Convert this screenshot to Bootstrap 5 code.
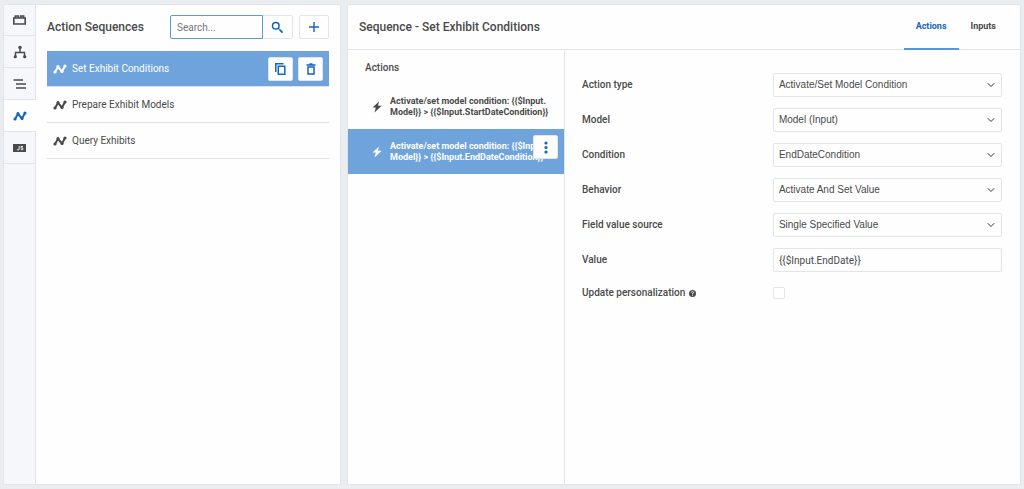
<!DOCTYPE html>
<html lang="en">
<head>
<meta charset="utf-8">
<meta name="viewport" content="width=device-width, initial-scale=1">
<title>Action Sequences</title>
<link href="https://cdn.jsdelivr.net/npm/bootstrap@5.3.0/dist/css/bootstrap.min.css" rel="stylesheet">
<style>
  :root { --line: #e1e4e9; --ink: #4a4a4a; --accent: #1464c0; --sel: #6fa3dc; }
  body { font-family: Roboto, "Liberation Sans", sans-serif; font-size: 10px; line-height: 12px; color: var(--ink); background: #e9edf0; }
  svg { display: block; flex: none; }
  .workspace { padding: 4px 3px; gap: 6px; }
  .panel { background: #fefefe; border: 1px solid var(--line); border-radius: 2px; }
  .panel-side { flex: 0 0 338px; }
  .rail { width: 32px; background: #f5f7fa; border-right: 1px solid var(--line); }
  .rail button { height: 32px; width: 31px; border: 0; border-bottom: 1px solid var(--line); background: transparent; color: var(--ink); }
  .rail button:first-child { height: 31px; }
  .rail button.active { background: #fefefe; color: var(--accent); width: 32px; }
  .title { font-size: 12px; line-height: 16px; font-weight: 500; margin: 0; }
  .side-body { padding: 10px 11px; }
  .side-head { height: 24px; margin-bottom: 12px; }
  .btn-box { padding: 0; border: 1px solid var(--line); border-radius: 2px; background: #fefefe; color: var(--accent); display: flex; align-items: center; justify-content: center; height: 24px; }
  .btn-sq { width: 25px; } .btn-wide { width: 30px; }
  .search { width: 93px; height: 24px; border: 1px solid #5b98dc; border-radius: 2px 0 0 2px; padding: 0 6px; font-size: 10px; color: var(--ink); background: #fefefe; }
  .search::placeholder { color: #757575; opacity: 1; }
  .search-btn { width: 30px; border-left: 0; border-radius: 0 2px 2px 0; margin-right: 6px; }
  .seq { height: 36px; padding: 0 6px; border-bottom: 1px solid #dfe0e3; gap: 5px; }
  .seq a, .act a { color: inherit; text-decoration: none; white-space: nowrap; }
  .seq.active, .act.active { background: var(--sel); color: #fff; }
  .main-head { height: 45px; border-bottom: 1px solid var(--line); padding: 0 12px 0 11px; }
  .tab { padding: 0 12px; height: 45px; line-height: 43px; font-size: 9px; font-weight: 700; color: var(--ink); text-decoration: none; border-bottom: 2px solid transparent; }
  .tab.active { color: var(--accent); border-color: #5596da; }
  .act-col { flex: 0 0 217px; min-width: 0; border-right: 1px solid var(--line); }
  .act-col h2 { font-size: 10px; line-height: 12px; font-weight: 500; margin: 0; padding: 12px 17px 10px; }
  .act { height: 45px; padding: 0 8px 0 24px; gap: 8px; font-size: 9px; font-weight: 700; line-height: 11px; }
  .act .more { position: absolute; right: 6px; top: 6px; }
  .fields { padding: 23px 18px 23px 17px; display: flex; flex-direction: column; gap: 11px; }
  .field { display: grid; grid-template-columns: 5fr 6fr; align-items: center; min-height: 24px; }
  .field label { font-weight: 500; }
  .field .form-select, .field .form-control { height: 24px; min-height: 24px; padding: 0 5px; border: 1px solid var(--line); border-radius: 2px; font-size: 10px; line-height: 22px; color: var(--ink); background-color: #fefefe; }
  .field .form-select { font-family: "Liberation Sans", sans-serif; background-position: right 6px center; background-size: 8px 8px; }
  .field .form-check-input { width: 12px; height: 12px; margin: 0; border: 1px solid var(--line); border-radius: 2px; }
  .field-check { min-height: 20px; }
</style>
</head>
<body>
<svg width="0" height="0" class="d-none" aria-hidden="true">
  <symbol id="trend" viewBox="0 0 14 10"><path d="M2 8 5 3l4 4.500L12 2" fill="none" stroke="currentColor" stroke-width="2"/><circle cx="2" cy="8" r="1.600" fill="currentColor"/><circle cx="5" cy="2.500" r="1.600" fill="currentColor"/><circle cx="9" cy="7.500" r="1.600" fill="currentColor"/><circle cx="12" cy="2" r="1.600" fill="currentColor"/></symbol>
  <symbol id="bolt" viewBox="0 0 10 12"><path d="M7 .5.5 6.500h3.300L2.500 11.500 9.700 4.800H6z" fill="currentColor"/></symbol>
</svg>
<div class="workspace d-flex vh-100">
  <aside class="panel panel-side d-flex">
    <nav class="rail d-flex flex-column" aria-label="Sections">
      <button type="button" class="d-flex align-items-center justify-content-center p-0" aria-label="Models"><svg width="13" height="10" viewBox="0 0 13 10" fill="none" stroke="currentColor" stroke-width="1.600"><path d="M.8 3h11.400v6H.8zM2.300 3V1h3v2M7.700 3V1h3v2"/></svg></button>
      <button type="button" class="d-flex align-items-center justify-content-center p-0" aria-label="Structure"><svg width="14" height="14" viewBox="0 0 14 14"><path d="M7 3v4M2.500 11V7.500h9V11" fill="none" stroke="currentColor" stroke-width="1.400"/><g fill="currentColor"><circle cx="7" cy="2.500" r="1.700"/><circle cx="2.300" cy="11.700" r="1.600"/><circle cx="11.700" cy="11.700" r="1.600"/></g></svg></button>
      <button type="button" class="d-flex align-items-center justify-content-center p-0" aria-label="Outline"><svg width="14" height="10" viewBox="0 0 14 10" stroke="currentColor" stroke-width="1.500"><path d="M.5 1H10M3 5h10M3 9h10"/></svg></button>
      <button type="button" class="active d-flex align-items-center justify-content-center p-0" aria-label="Action sequences"><svg width="14" height="10"><use href="#trend"/></svg></button>
      <button type="button" class="d-flex align-items-center justify-content-center p-0" aria-label="Scripts"><svg width="13" height="8" viewBox="0 0 13 8"><rect width="13" height="8" fill="currentColor"/><path d="M6.200 2v3q0 1-1 1t-1-1M10 2.500H8v1.500h1.800v1.600H7.700" fill="none" stroke="#f5f7fa" stroke-width=".9"/></svg></button>
    </nav>
    <div class="side-body flex-grow-1">
      <div class="side-head d-flex align-items-center">
        <h1 class="title me-auto">Action Sequences</h1>
        <input class="search" type="text" placeholder="Search..." aria-label="Search">
        <button type="button" class="btn-box search-btn" aria-label="Search"><svg width="13" height="13" viewBox="0 0 13 13" fill="none" stroke="currentColor"><circle cx="4.800" cy="4.800" r="3.300" stroke-width="1.500"/><path d="m7.200 7.200 1.300 1.300" stroke-width="1.200"/><path d="m8.600 8.600 3 3" stroke-width="1.800"/></svg></button>
        <button type="button" class="btn-box btn-wide" aria-label="Add"><svg width="10" height="10" viewBox="0 0 10 10" stroke="currentColor" stroke-width="1.400"><path d="M5 0v10M0 5h10"/></svg></button>
      </div>
      <div>
        <div class="seq active d-flex align-items-center">
          <svg width="14" height="10"><use href="#trend"/></svg><a href="#" class="me-auto">Set Exhibit Conditions</a>
          <button type="button" class="btn-box btn-sq" aria-label="Copy"><svg width="11" height="12" viewBox="0 0 11 12" fill="none" stroke="currentColor" stroke-width="1.500"><path d="M3.300 3.300h6.500v8H3.300zM.8 9V.8h7.700"/></svg></button>
          <button type="button" class="btn-box btn-sq" aria-label="Delete"><svg width="10" height="12" viewBox="0 0 10 12" fill="none" stroke="currentColor" stroke-width="1.500"><path d="M.5 2h9M3.500 1h3M2 4h6v7H2z"/></svg></button>
        </div>
        <div class="seq d-flex align-items-center"><svg width="14" height="10"><use href="#trend"/></svg><a href="#">Prepare Exhibit Models</a></div>
        <div class="seq d-flex align-items-center"><svg width="14" height="10"><use href="#trend"/></svg><a href="#">Query Exhibits</a></div>
      </div>
    </div>
  </aside>
  <main class="panel flex-grow-1 d-flex flex-column">
    <header class="main-head d-flex align-items-center">
      <h1 class="title me-auto">Sequence - Set Exhibit Conditions</h1>
      <nav class="d-flex"><a href="#" class="tab active">Actions</a><a href="#" class="tab">Inputs</a></nav>
    </header>
    <div class="d-flex flex-grow-1">
      <section class="act-col">
        <h2>Actions</h2>
        <div class="act d-flex align-items-center"><svg width="10" height="12"><use href="#bolt"/></svg><a href="#">Activate/set model condition: {{$Input.<br>Model}} &gt; {{$Input.StartDateCondition}}</a></div>
        <div class="act active d-flex align-items-center position-relative"><svg width="10" height="12"><use href="#bolt"/></svg><a href="#">Activate/set model condition: {{$Input.<br>Model}} &gt; {{$Input.EndDateCondition}}</a>
          <button type="button" class="btn-box btn-sq more" aria-label="More"><svg width="4" height="13" viewBox="0 0 4 13" fill="currentColor"><circle cx="2" cy="2" r="1.600"/><circle cx="2" cy="6.500" r="1.600"/><circle cx="2" cy="11" r="1.600"/></svg></button></div>
      </section>
      <form class="fields flex-grow-1">
        <div class="field"><label for="f1">Action type</label><select id="f1" class="form-select"><option>Activate/Set Model Condition</option></select></div>
        <div class="field"><label for="f2">Model</label><select id="f2" class="form-select"><option>Model (Input)</option></select></div>
        <div class="field"><label for="f3">Condition</label><select id="f3" class="form-select"><option>EndDateCondition</option></select></div>
        <div class="field"><label for="f4">Behavior</label><select id="f4" class="form-select"><option>Activate And Set Value</option></select></div>
        <div class="field"><label for="f5">Field value source</label><select id="f5" class="form-select"><option>Single Specified Value</option></select></div>
        <div class="field"><label for="f6">Value</label><input id="f6" type="text" class="form-control" value="{{$Input.EndDate}}"></div>
        <div class="field field-check"><label for="f7" class="d-flex align-items-center gap-1">Update personalization <svg width="7" height="7" viewBox="0 0 14 14"><circle cx="7" cy="7" r="7" fill="currentColor"/><path d="M4.700 5.200Q5 3.200 7 3.200t2.200 1.900Q9.200 6.500 7 7.300V8.500M7 9.700v1.800" fill="none" stroke="#fff" stroke-width="1.800"/></svg></label><input id="f7" type="checkbox" class="form-check-input"></div>
      </form>
    </div>
  </main>
</div>
<script src="https://cdn.jsdelivr.net/npm/bootstrap@5.3.0/dist/js/bootstrap.bundle.min.js"></script>
</body>
</html>
